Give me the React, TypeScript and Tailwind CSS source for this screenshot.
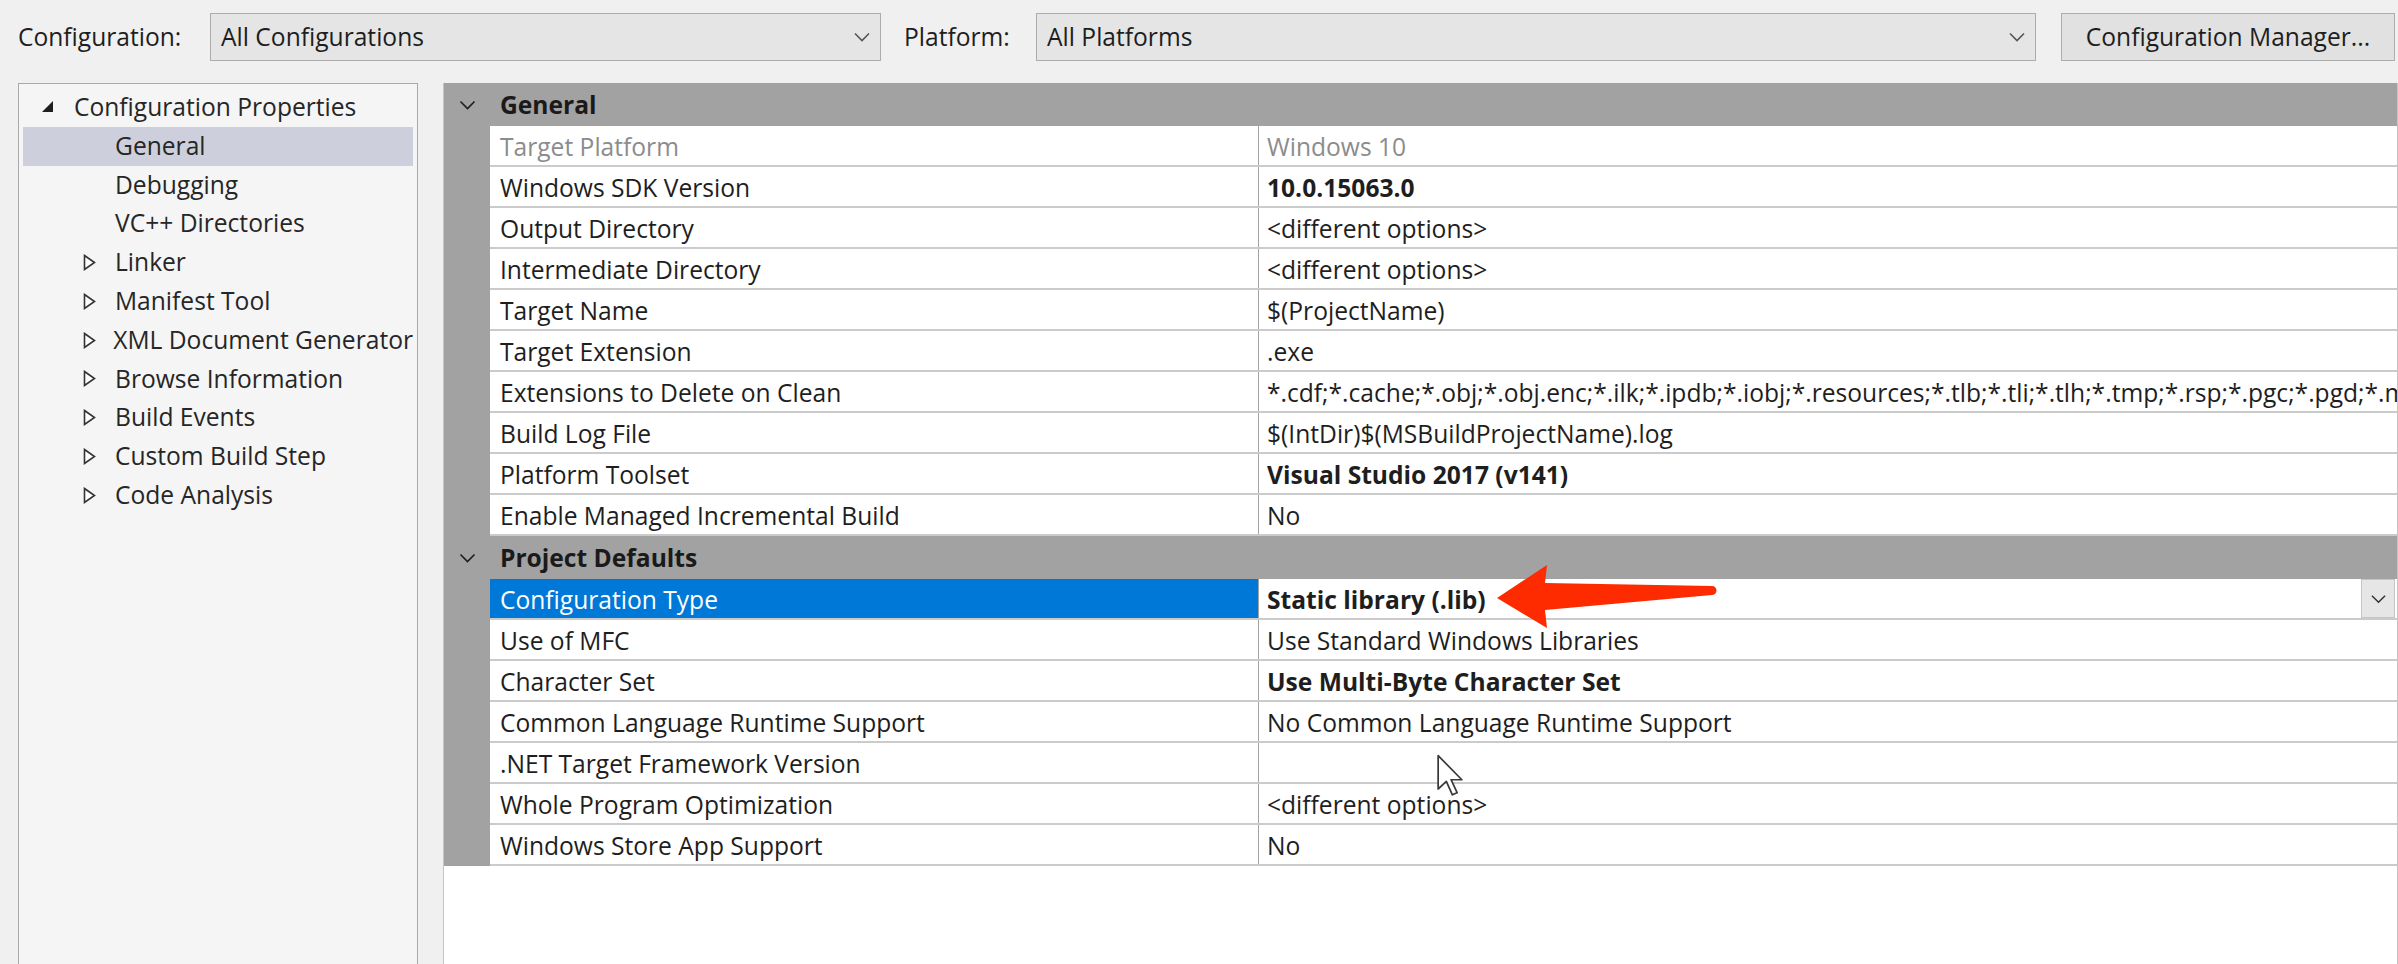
import React from "react";

type Prop = {
  name: string;
  value: string;
  bold?: boolean;
  disabled?: boolean;
  selected?: boolean;
};

const general: Prop[] = [
  { name: "Target Platform", value: "Windows 10", disabled: true },
  { name: "Windows SDK Version", value: "10.0.15063.0", bold: true },
  { name: "Output Directory", value: "<different options>" },
  { name: "Intermediate Directory", value: "<different options>" },
  { name: "Target Name", value: "$(ProjectName)" },
  { name: "Target Extension", value: ".exe" },
  {
    name: "Extensions to Delete on Clean",
    value:
      "*.cdf;*.cache;*.obj;*.obj.enc;*.ilk;*.ipdb;*.iobj;*.resources;*.tlb;*.tli;*.tlh;*.tmp;*.rsp;*.pgc;*.pgd;*.meta;*.tlog;*.manifest;*.res;*.pch;*.exp;*.idb;*.rep;*.xdc;*.pdb;*_manifest.rc;*.bsc;*.sbr;*.xml;*.metagen;*.bi;$(TargetPath)",
  },
  { name: "Build Log File", value: "$(IntDir)$(MSBuildProjectName).log" },
  { name: "Platform Toolset", value: "Visual Studio 2017 (v141)", bold: true },
  { name: "Enable Managed Incremental Build", value: "No" },
];

const projectDefaults: Prop[] = [
  { name: "Configuration Type", value: "Static library (.lib)", bold: true, selected: true },
  { name: "Use of MFC", value: "Use Standard Windows Libraries" },
  { name: "Character Set", value: "Use Multi-Byte Character Set", bold: true },
  { name: "Common Language Runtime Support", value: "No Common Language Runtime Support" },
  { name: ".NET Target Framework Version", value: "" },
  { name: "Whole Program Optimization", value: "<different options>" },
  { name: "Windows Store App Support", value: "No" },
];

const tree = [
  { label: "Configuration Properties", root: true },
  { label: "General", selected: true },
  { label: "Debugging" },
  { label: "VC++ Directories" },
  { label: "Linker", expander: true },
  { label: "Manifest Tool", expander: true },
  { label: "XML Document Generator", expander: true },
  { label: "Browse Information", expander: true },
  { label: "Build Events", expander: true },
  { label: "Custom Build Step", expander: true },
  { label: "Code Analysis", expander: true },
];

function Chevron({ color = "#555", width = 16 }: { color?: string; width?: number }) {
  return (
    <svg width={width} height={10} viewBox="0 0 16 10">
      <polyline points="1,1.5 8,8.5 15,1.5" fill="none" stroke={color} strokeWidth={1.6} />
    </svg>
  );
}

function Dropdown({ text, width }: { text: string; width: string }) {
  return (
    <div className={`${width} h-[48px] flex items-center justify-between pl-[10px] pr-[10px] bg-[#e5e5e5] border border-[#acacac]`}>
      <span>{text}</span>
      <Chevron />
    </div>
  );
}

function GroupHeader({ title }: { title: string }) {
  return (
    <div className="flex items-center h-[43px] bg-[#a2a2a2]">
      <div className="w-[46px] flex justify-center pl-[1px]">
        <Chevron color="#1e1e1e" width={17} />
      </div>
      <span className="pl-[10px] pt-[2px] font-bold text-[#1a1a1a]">{title}</span>
    </div>
  );
}

function PropRow({ p }: { p: Prop }) {
  return (
    <div className="flex h-[41px]">
      <div className="w-[46px] shrink-0 bg-[#a2a2a2]" />
      <div className="flex flex-1 min-w-0 border-b-2 border-[#cbcbcb]">
        <div
          className={`w-[769px] shrink-0 flex items-center pl-[10px] pt-[3px] border-r border-[#a3a3a3] ${
            p.selected ? "bg-[#0078d7] text-white" : p.disabled ? "bg-white text-[#8c8c8c]" : "bg-white"
          }`}
        >
          {p.name}
        </div>
        <div className="flex flex-1 min-w-0 items-center bg-white">
          <span
            className={`flex-1 pl-[8px] pt-[3px] leading-[32px] overflow-hidden whitespace-nowrap ${p.bold ? "font-bold" : ""} ${
              p.disabled ? "text-[#8c8c8c]" : ""
            }`}
          >
            {p.value}
          </span>
          {p.selected && (
            <div className="w-[34px] h-full mr-[2px] flex items-center justify-center bg-[#e6e6e6] border border-[#c6c6c6]">
              <Chevron color="#333" width={15} />
            </div>
          )}
        </div>
      </div>
    </div>
  );
}

export default function App() {
  return (
    <div className="relative w-[2398px] h-[964px] overflow-hidden bg-[#f0f0f0] text-[24.6px] leading-none text-[#1e1e1e] font-['Open_Sans','Noto_Sans',sans-serif]">
      {/* toolbar */}
      <div className="flex items-start h-[83px] pt-[13px]">
        <div className="ml-[18px] w-[192px] h-[48px] flex items-center">Configuration:</div>
        <Dropdown text="All Configurations" width="w-[671px]" />
        <div className="ml-[23px] w-[132px] h-[48px] flex items-center">Platform:</div>
        <Dropdown text="All Platforms" width="w-[1000px]" />
        <div className="ml-[25px] w-[334px] h-[48px] flex items-center justify-center bg-[#e1e1e1] border border-[#adadad]">
          Configuration Manager...
        </div>
      </div>

      <div className="flex h-[881px]">
        {/* tree */}
        <div className="ml-[18px] w-[400px] h-[900px] shrink-0 bg-[#f5f5f5] border border-[#a9a9a9] pt-[4px] px-[4px]">
          {tree.map((t) => (
            <div
              key={t.label}
              className={`flex items-center h-[38.8px] whitespace-nowrap ${t.root ? "pl-[19px]" : "pl-[60px]"} ${
                t.selected ? "bg-[#cdd0dc]" : ""
              }`}
            >
              <div className="w-[32px] flex items-center">
                {t.root && (
                  <svg width="12" height="12" viewBox="0 0 12 12">
                    <polygon points="11,0 11,11 0,11" fill="#1e1e1e" />
                  </svg>
                )}
                {t.expander && (
                  <svg width="13" height="17" viewBox="0 0 13 17">
                    <polygon points="1.5,1.5 11.5,8.5 1.5,15.5" fill="white" stroke="#333" strokeWidth={1.6} />
                  </svg>
                )}
              </div>
              <span className="text-[#262626]">{t.label}</span>
            </div>
          ))}
        </div>

        {/* property grid */}
        <div className="ml-[25px] w-[1955px] shrink-0 bg-white border-l border-r border-[#c4c4c4]">
          <GroupHeader title="General" />
          {general.map((p) => (
            <PropRow key={p.name} p={p} />
          ))}
          <GroupHeader title="Project Defaults" />
          {projectDefaults.map((p) => (
            <PropRow key={p.name} p={p} />
          ))}
        </div>
      </div>

      {/* red annotation arrow */}
      <svg className="absolute left-[1490px] top-[560px]" width="235" height="75" viewBox="0 0 235 75">
        <path d="M7 38 L57 5 L55 23 L222 26 A4.5 4.5 0 0 1 222 35 L55 50 L57 68 Z" fill="#fe2a00" />
      </svg>

      {/* mouse cursor */}
      <svg className="absolute left-[1436px] top-[753px]" width="28" height="44" viewBox="0 0 13 20">
        <path d="M1 1 L1 16.5 L4.8 13 L7.6 19.2 L9.8 18.2 L7 12.2 L12 12.2 Z" fill="white" stroke="#3a3a3a" strokeWidth={0.8} strokeLinejoin="round" />
      </svg>
    </div>
  );
}
